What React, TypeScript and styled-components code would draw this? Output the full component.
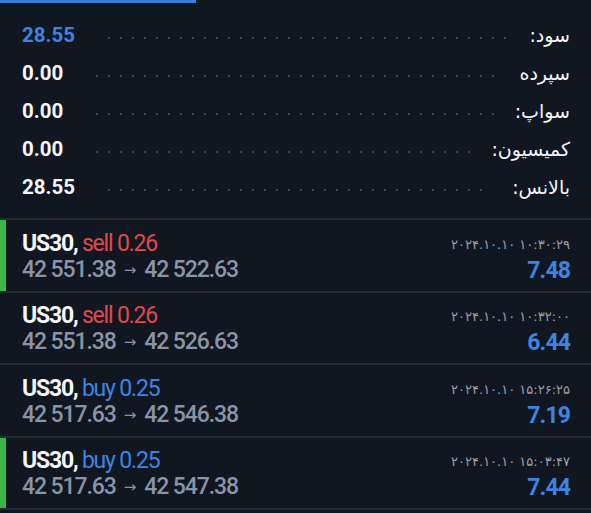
import React from 'react'
import styled, { createGlobalStyle } from 'styled-components'

const GlobalStyle = createGlobalStyle`
  html, body {
    margin: 0;
    padding: 0;
    background: #111720;
  }
  body {
    font-family: Roboto, 'Noto Sans', sans-serif;
    color: #f4f6f8;
  }
`

const Page = styled.div`
  width: 591px;
  height: 513px;
  background: #111720;
  overflow: hidden;
`

const TabIndicator = styled.div`
  width: 196px;
  height: 3px;
  background: #3a7be0;
`

const Summary = styled.div`
  display: flex;
  flex-direction: column;
  padding: 13px 21px 12px 22px;
`

const SummaryRow = styled.div`
  display: flex;
  align-items: center;
  height: 38px;
`

const Value = styled.span<{ $accent?: boolean }>`
  font-size: 20.5px;
  font-weight: 700;
  color: ${(p) => (p.$accent ? '#3d83e4' : '#f4f6f8')};
`

const Dots = styled.span`
  flex: 1;
  height: 4px;
  margin: 6px 20px 0 28px;
  background-image: radial-gradient(circle, #3d434d 1.2px, transparent 1.5px);
  background-size: 12px 4px;
  background-position: 0 0;
`

const Label = styled.span`
  font-family: 'DejaVu Sans', sans-serif;
  font-size: 19px;
  color: #f4f6f8;
  direction: rtl;
`

const TradeList = styled.div`
  display: flex;
  flex-direction: column;
  border-top: 2px solid #262c35;
`

const Trade = styled.div<{ $marked?: boolean }>`
  display: flex;
  justify-content: space-between;
  height: 72.5px;
  padding: 5px 21px 0 22px;
  box-sizing: border-box;
  border-bottom: 2px solid #262c35;
  box-shadow: ${(p) => (p.$marked ? 'inset 6px 0 0 #3cb44a' : 'none')};
`

const Column = styled.div<{ $end?: boolean }>`
  display: flex;
  flex-direction: column;
  justify-content: center;
  align-items: ${(p) => (p.$end ? 'flex-end' : 'flex-start')};
`

const Title = styled.div`
  font-size: 23px;
  line-height: 26px;
  font-weight: 700;
  color: #f4f6f8;
  letter-spacing: -1.2px;
`

const Side = styled.span<{ $sell?: boolean }>`
  font-weight: 400;
  color: ${(p) => (p.$sell ? '#e2484c' : '#3d83e4')};
`

const Prices = styled.div`
  font-size: 23px;
  line-height: 26px;
  font-weight: 500;
  color: #8a94a6;
  letter-spacing: -1.1px;
`

const Arrow = styled.span`
  display: inline-block;
  font-family: 'DejaVu Sans', sans-serif;
  font-size: 15px;
  font-weight: 400;
  letter-spacing: 0;
  margin: 0 8px 0 8px;
  position: relative;
  top: -2px;
`

const Time = styled.div`
  font-family: 'DejaVu Sans', sans-serif;
  font-size: 13px;
  line-height: 26px;
  color: #9aa1ab;
`

const Profit = styled.div`
  font-size: 23px;
  line-height: 26px;
  font-weight: 700;
  color: #3d83e4;
  letter-spacing: -0.9px;
`

const summary = [
  { label: 'سود:', value: '28.55', accent: true },
  { label: 'سپرده', value: '0.00' },
  { label: 'سواپ:', value: '0.00' },
  { label: 'کمیسیون:', value: '0.00' },
  { label: 'بالانس:', value: '28.55' },
]

const trades = [
  { side: 'sell', vol: '0.26', open: '42 551.38', close: '42 522.63', time: '۲۰۲۴.۱۰.۱۰ ۱۰:۳۰:۲۹', profit: '7.48', marked: true },
  { side: 'sell', vol: '0.26', open: '42 551.38', close: '42 526.63', time: '۲۰۲۴.۱۰.۱۰ ۱۰:۳۲:۰۰', profit: '6.44' },
  { side: 'buy', vol: '0.25', open: '42 517.63', close: '42 546.38', time: '۲۰۲۴.۱۰.۱۰ ۱۵:۲۶:۲۵', profit: '7.19' },
  { side: 'buy', vol: '0.25', open: '42 517.63', close: '42 547.38', time: '۲۰۲۴.۱۰.۱۰ ۱۵:۰۳:۴۷', profit: '7.44', marked: true },
]

export default function App() {
  return (
    <Page>
      <GlobalStyle />
      <TabIndicator />
      <Summary>
        {summary.map((row) => (
          <SummaryRow key={row.label}>
            <Value $accent={row.accent}>{row.value}</Value>
            <Dots />
            <Label>{row.label}</Label>
          </SummaryRow>
        ))}
      </Summary>
      <TradeList>
        {trades.map((t, i) => (
          <Trade key={i} $marked={t.marked}>
            <Column>
              <Title>
                US30, <Side $sell={t.side === 'sell'}>{t.side} {t.vol}</Side>
              </Title>
              <Prices>
                {t.open}
                <Arrow>→</Arrow>
                {t.close}
              </Prices>
            </Column>
            <Column $end>
              <Time dir='ltr'>{t.time}</Time>
              <Profit>{t.profit}</Profit>
            </Column>
          </Trade>
        ))}
      </TradeList>
    </Page>
  )
}
